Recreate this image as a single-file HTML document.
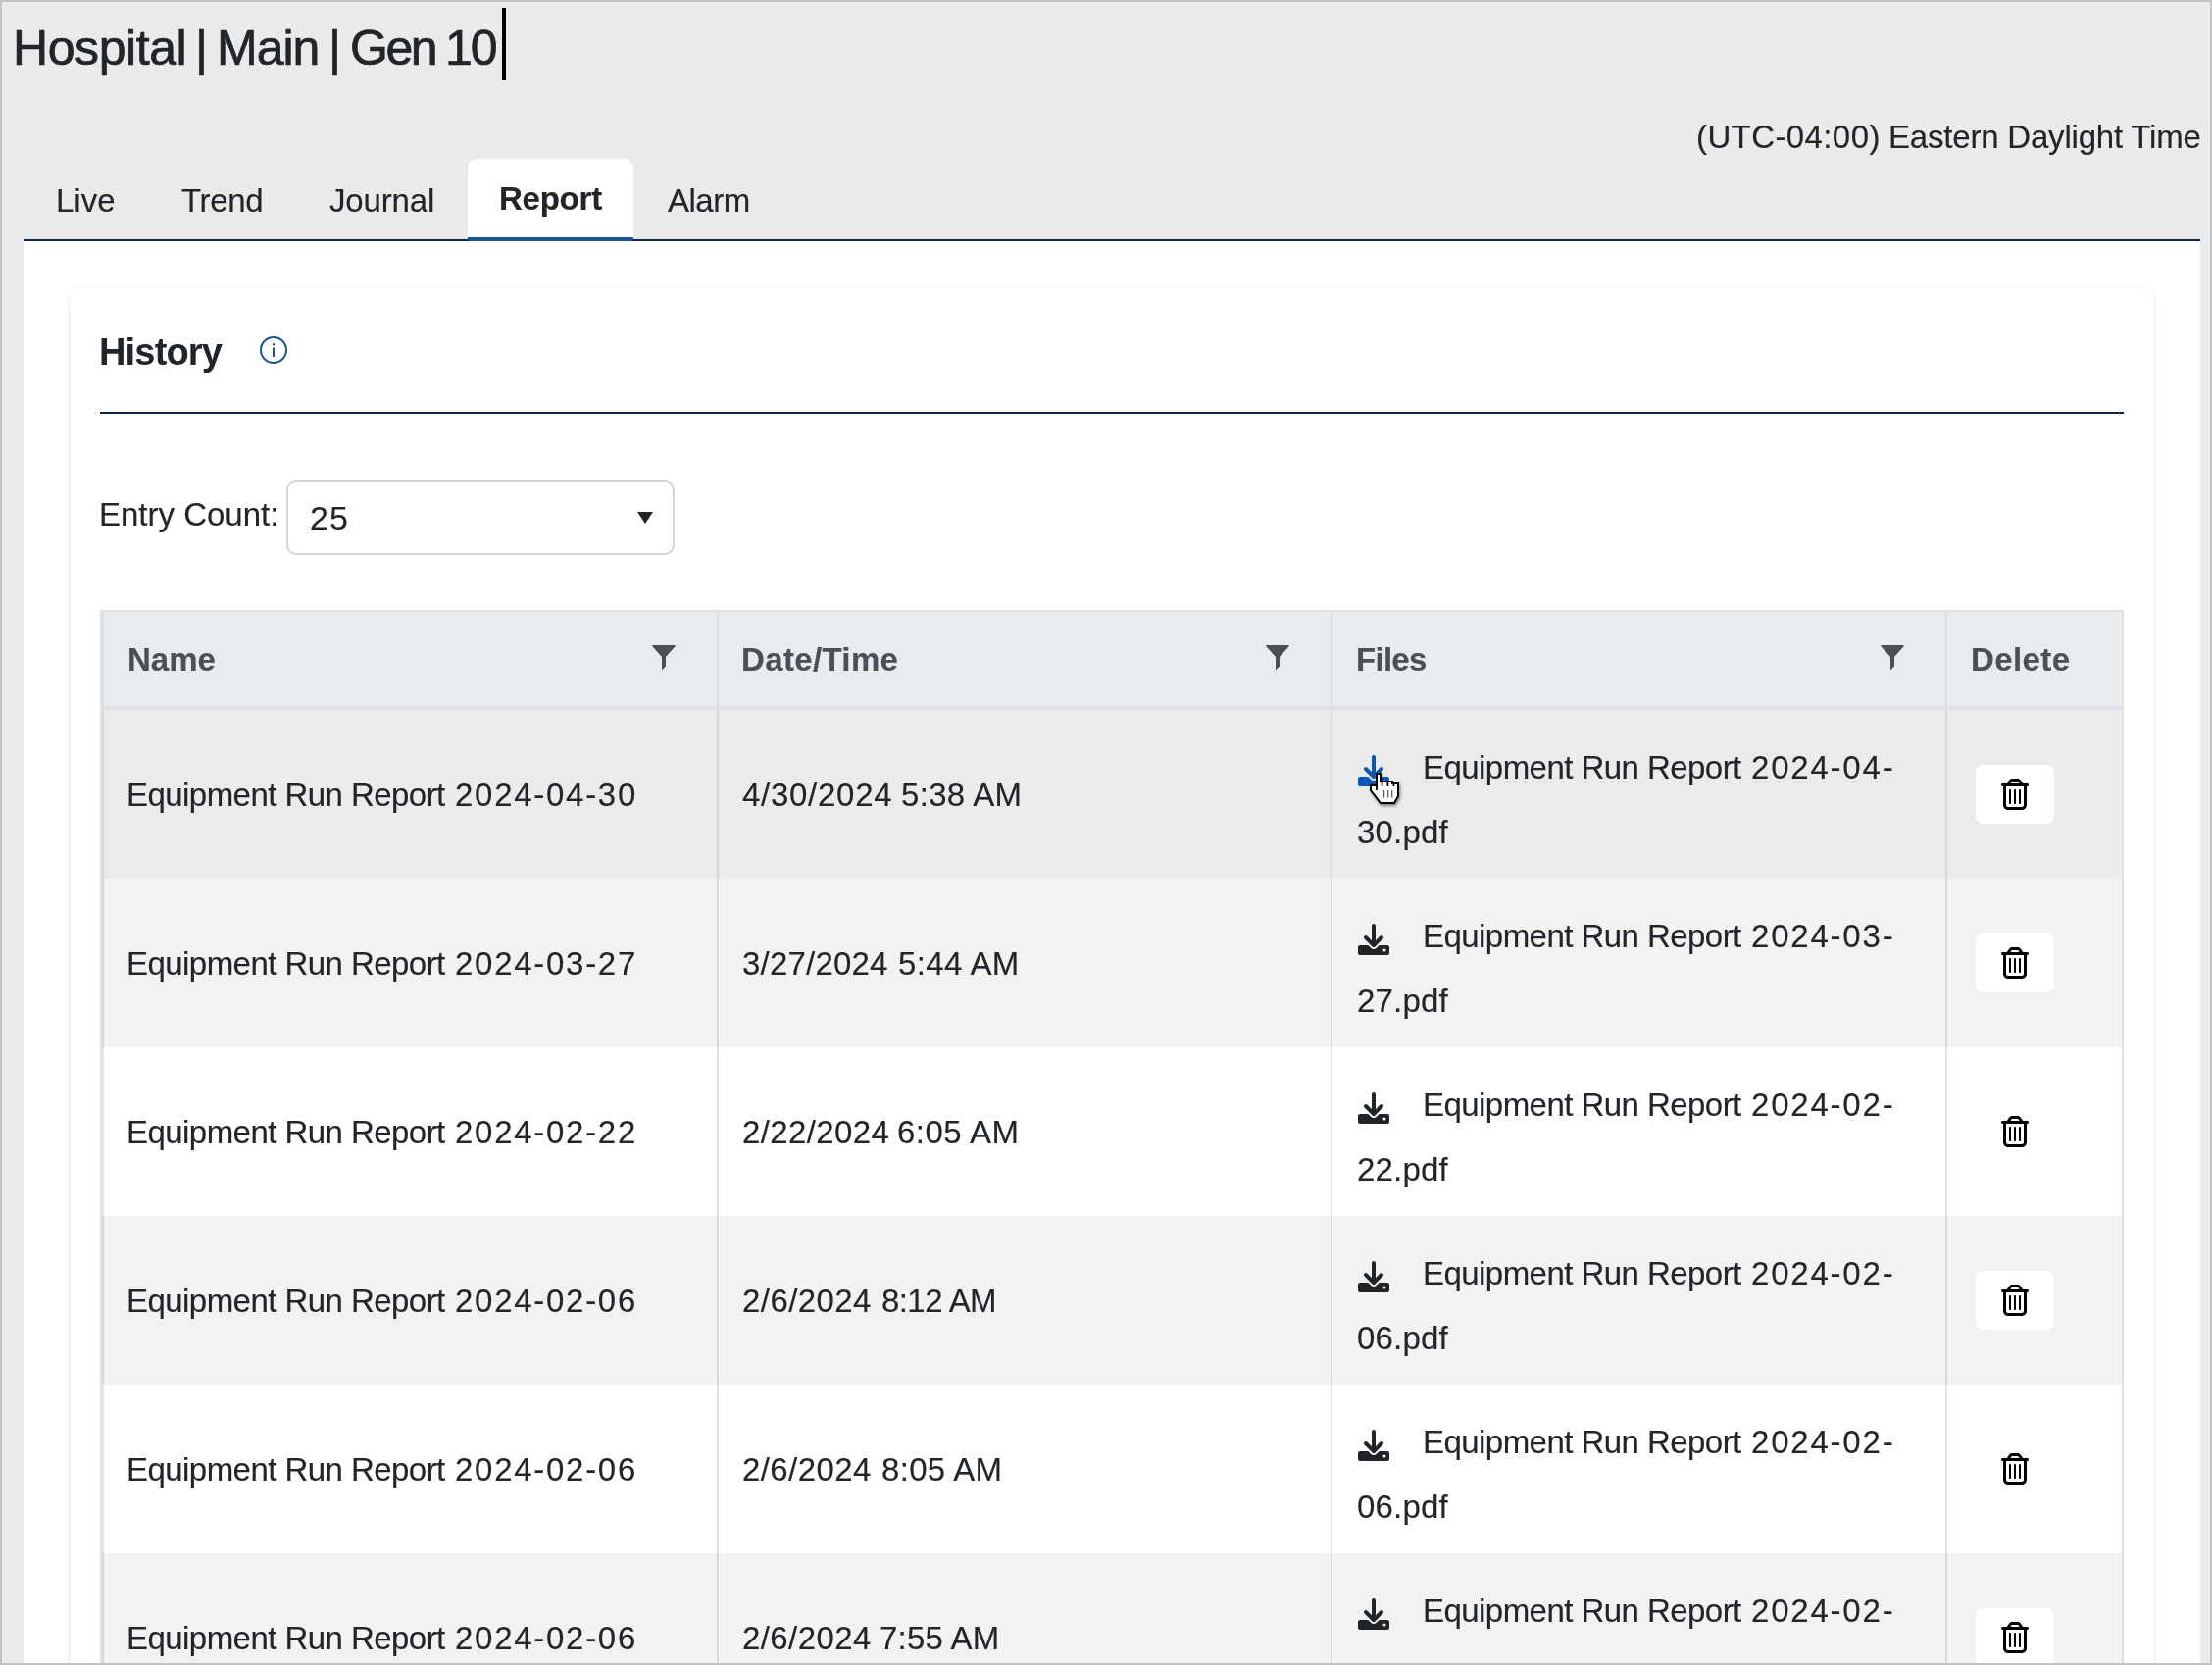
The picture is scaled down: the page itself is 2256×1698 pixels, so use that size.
<!DOCTYPE html>
<html><head><meta charset="utf-8">
<style>
*{box-sizing:border-box;margin:0;padding:0}
html,body{width:2256px;height:1698px;overflow:hidden}
body{-webkit-font-smoothing:antialiased;position:relative;background:#eaeaea;font-family:"Liberation Sans",sans-serif;color:#212529}
.frame{position:absolute;left:0;top:0;width:2256px;height:1698px;border:2px solid #bfc4c8;z-index:50}
.abs{position:absolute;white-space:nowrap}
.t,.tx{will-change:transform}
.t{font-size:33px;line-height:33px;-webkit-text-stroke:0.15px currentColor}
.hd{font-weight:700;color:#495057}
.row{position:absolute;left:104px;width:2060px;height:172px}
.vd{position:absolute;width:2px}
.delbtn{position:absolute;left:2015px;width:80px;height:60px;background:#fff;border-radius:8px}
</style></head>
<body>
<div class="frame"></div>
<div class="abs tx" style="left:13px;top:24px;font-size:50px;line-height:50px;-webkit-text-stroke:0.7px #212529;letter-spacing:-0.43px">Hospital</div>
<div class="abs tx" style="left:199.3px;top:24px;font-size:50px;line-height:50px;-webkit-text-stroke:0.7px #212529;letter-spacing:0px">|</div>
<div class="abs tx" style="left:221px;top:24px;font-size:50px;line-height:50px;-webkit-text-stroke:0.7px #212529;letter-spacing:-1px">Main</div>
<div class="abs tx" style="left:335px;top:24px;font-size:50px;line-height:50px;-webkit-text-stroke:0.7px #212529;letter-spacing:0px">|</div>
<div class="abs tx" style="left:357px;top:24px;font-size:50px;line-height:50px;-webkit-text-stroke:0.7px #212529;letter-spacing:-2.5px">Gen</div>
<div class="abs tx" style="left:454px;top:24px;font-size:50px;line-height:50px;-webkit-text-stroke:0.7px #212529;letter-spacing:-2px">10</div>
<div class="abs" style="left:512px;top:8px;width:4px;height:74px;background:#000"></div>
<div class="abs t" style="left:1730px;top:123px;letter-spacing:0.4px">(UTC-04:00)</div>
<div class="abs t" style="left:1926px;top:123px;letter-spacing:-0.2px">Eastern Daylight Time</div>
<div class="abs" style="left:24px;top:246px;width:2220px;height:1452px;background:#fff"></div>
<div class="abs" style="left:477px;top:162px;width:169px;height:84px;background:#fff;border-radius:10px 10px 0 0"></div>
<div class="abs" style="left:24px;top:244px;width:2220px;height:2px;background:#0f2443"></div>
<div class="abs" style="left:477px;top:242px;width:169px;height:4px;background:#1a5494"></div>
<div class="abs t" style="left:57px;top:188px;">Live</div>
<div class="abs t" style="left:185px;top:188px;letter-spacing:-0.37px">Trend</div>
<div class="abs t" style="left:336px;top:188px;letter-spacing:-0.17px">Journal</div>
<div class="abs t" style="left:509px;top:186px;font-weight:700;letter-spacing:-0.24px">Report</div>
<div class="abs t" style="left:681px;top:188px;letter-spacing:-0.5px">Alarm</div>
<div class="abs" style="left:72px;top:294px;width:2124px;height:1500px;background:#fff;border-radius:14px;box-shadow:0 2px 7px rgba(30,40,60,.13)"></div>
<div class="abs tx" style="left:101px;top:340px;font-size:38px;line-height:38px;font-weight:700;letter-spacing:-0.83px">History</div>
<svg class="abs" style="left:263px;top:341px" width="32" height="32" viewBox="0 0 32 32"><circle cx="16" cy="16" r="13" fill="none" stroke="#1a5494" stroke-width="2"/><rect x="15" y="9.3" width="2" height="2" fill="#1a5494"/><rect x="15" y="13.5" width="2" height="9.5" fill="#1a5494"/></svg>
<div class="abs" style="left:102px;top:420px;width:2064px;height:2px;background:#0f2443"></div>
<div class="abs t" style="left:101px;top:508px;">Entry Count:</div>
<div class="abs" style="left:292px;top:490px;width:396px;height:76px;border:2px solid #ced4da;border-radius:10px;background:#fff"></div>
<div class="abs t" style="left:316px;top:512px;letter-spacing:1.2px;font-size:34px">25</div>
<svg class="abs" style="left:650px;top:522px" width="16" height="12" viewBox="0 0 16 12"><path d="M0 0H16L8 12Z" fill="#212529"/></svg>
<div class="abs" style="left:102px;top:622px;width:2064px;height:1100px;background:#fff;border:2px solid #e0e3e5;border-bottom:none"></div>
<div class="abs" style="left:104px;top:624px;width:2060px;height:96px;background:#e9ecef"></div>
<div class="abs" style="left:104px;top:720px;width:2060px;height:4px;background:#dde1e5"></div>
<div class="vd" style="left:104px;top:624px;height:96px;background:#dadee1"></div>
<div class="vd" style="left:731px;top:624px;height:96px;background:#dadee1"></div>
<div class="vd" style="left:1357px;top:624px;height:96px;background:#dadee1"></div>
<div class="vd" style="left:1984px;top:624px;height:96px;background:#dadee1"></div>
<div class="abs t" style="left:130px;top:656px;font-weight:700;color:#495057">Name</div>
<div class="abs t" style="left:756px;top:656px;font-weight:700;color:#495057;letter-spacing:0.35px">Date/Time</div>
<div class="abs t" style="left:1383px;top:656px;font-weight:700;color:#495057;letter-spacing:-0.72px">Files</div>
<div class="abs t" style="left:2010px;top:656px;font-weight:700;color:#495057;letter-spacing:0.4px">Delete</div>
<svg class="abs" style="left:665px;top:658px" width="24" height="26" viewBox="0 0 24 26"><path fill="#495057" d="M1 0H23Q24.5 0 23.6 1.3L14 12V21.6L10 25.6V12L0.4 1.3Q-0.5 0 1 0Z"/></svg>
<svg class="abs" style="left:1291px;top:658px" width="24" height="26" viewBox="0 0 24 26"><path fill="#495057" d="M1 0H23Q24.5 0 23.6 1.3L14 12V21.6L10 25.6V12L0.4 1.3Q-0.5 0 1 0Z"/></svg>
<svg class="abs" style="left:1918px;top:658px" width="24" height="26" viewBox="0 0 24 26"><path fill="#495057" d="M1 0H23Q24.5 0 23.6 1.3L14 12V21.6L10 25.6V12L0.4 1.3Q-0.5 0 1 0Z"/></svg>
<div class="row" style="top:724px;background:#ebebeb"></div>
<div class="vd" style="left:104px;top:724px;height:172px;background:#d6d8d8"></div>
<div class="vd" style="left:731px;top:724px;height:172px;background:#d6d8d8"></div>
<div class="vd" style="left:1357px;top:724px;height:172px;background:#d6d8d8"></div>
<div class="vd" style="left:1984px;top:724px;height:172px;background:#d6d8d8"></div>
<div class="abs t" style="left:129px;top:794px;letter-spacing:-0.55px">Equipment Run Report</div>
<div class="abs t" style="left:463.5px;top:794px;letter-spacing:1.72px">2024-04-30</div>
<div class="abs t" style="left:757.0px;top:794px;letter-spacing:0.72px">4/30/2024</div>
<div class="abs t" style="left:919.4px;top:794px;letter-spacing:0.32px">5:38 AM</div>
<svg class="abs" style="left:1385px;top:770px" width="32" height="32" viewBox="0 0 512 512"><path fill="#0b57b8" d="M288 32c0-17.7-14.3-32-32-32s-32 14.3-32 32V274.7l-73.4-73.4c-12.5-12.5-32.8-12.5-45.3 0s-12.5 32.8 0 45.3l128 128c12.5 12.5 32.8 12.5 45.3 0l128-128c12.5-12.5 12.5-32.8 0-45.3s-32.8-12.5-45.3 0L288 274.7V32zM32 352c-17.7 0-32 14.3-32 32v96c0 17.7 14.3 32 32 32H480c17.7 0 32-14.3 32-32V384c0-17.7-14.3-32-32-32H346.5l-45.3 45.3c-25 25-65.5 25-90.5 0L165.5 352H32zm400 56a24 24 0 1 1 0 48 24 24 0 1 1 0-48z"/></svg>
<div class="abs t" style="left:1451px;top:766px;letter-spacing:-0.55px">Equipment Run Report</div>
<div class="abs t" style="left:1785.5px;top:766px;letter-spacing:1.79px">2024-04-</div>
<div class="abs t" style="left:1384px;top:832px;letter-spacing:0.2px">30.pdf</div>
<div class="delbtn" style="top:780px"></div>
<svg class="abs" style="left:2041px;top:794px" width="28" height="32" viewBox="0 0 448 512"><path fill="#000" d="M170.5 51.6L151.5 80h145l-19-28.4c-1.5-2.2-4-3.6-6.7-3.6H177.1c-2.7 0-5.2 1.3-6.7 3.6zm147-26.6L354.2 80H368h48 8c13.3 0 24 10.7 24 24s-10.7 24-24 24h-8V432c0 44.2-35.8 80-80 80H112c-44.2 0-80-35.8-80-80V128H24c-13.3 0-24-10.7-24-24S10.7 80 24 80h8H80 93.8l36.7-55.1C140.9 9.4 158.4 0 177.1 0h93.7c18.7 0 36.2 9.4 46.6 24.9zM80 128V432c0 17.7 14.3 32 32 32H336c17.7 0 32-14.3 32-32V128H80zm80 64V400c0 8.8-7.2 16-16 16s-16-7.2-16-16V192c0-8.8 7.2-16 16-16s16 7.2 16 16zm80 0V400c0 8.8-7.2 16-16 16s-16-7.2-16-16V192c0-8.8 7.2-16 16-16s16 7.2 16 16zm80 0V400c0 8.8-7.2 16-16 16s-16-7.2-16-16V192c0-8.8 7.2-16 16-16s16 7.2 16 16z"/></svg>
<div class="row" style="top:896px;background:#f2f2f2"></div>
<div class="vd" style="left:104px;top:896px;height:172px;background:#d6d8d8"></div>
<div class="vd" style="left:731px;top:896px;height:172px;background:#d6d8d8"></div>
<div class="vd" style="left:1357px;top:896px;height:172px;background:#d6d8d8"></div>
<div class="vd" style="left:1984px;top:896px;height:172px;background:#d6d8d8"></div>
<div class="abs t" style="left:129px;top:966px;letter-spacing:-0.55px">Equipment Run Report</div>
<div class="abs t" style="left:463.5px;top:966px;letter-spacing:1.72px">2024-03-27</div>
<div class="abs t" style="left:757.0px;top:966px;letter-spacing:0.2px">3/27/2024</div>
<div class="abs t" style="left:915.5px;top:966px;letter-spacing:0.38px">5:44 AM</div>
<svg class="abs" style="left:1385px;top:942px" width="32" height="32" viewBox="0 0 512 512"><path fill="#212529" d="M288 32c0-17.7-14.3-32-32-32s-32 14.3-32 32V274.7l-73.4-73.4c-12.5-12.5-32.8-12.5-45.3 0s-12.5 32.8 0 45.3l128 128c12.5 12.5 32.8 12.5 45.3 0l128-128c12.5-12.5 12.5-32.8 0-45.3s-32.8-12.5-45.3 0L288 274.7V32zM32 352c-17.7 0-32 14.3-32 32v96c0 17.7 14.3 32 32 32H480c17.7 0 32-14.3 32-32V384c0-17.7-14.3-32-32-32H346.5l-45.3 45.3c-25 25-65.5 25-90.5 0L165.5 352H32zm400 56a24 24 0 1 1 0 48 24 24 0 1 1 0-48z"/></svg>
<div class="abs t" style="left:1451px;top:938px;letter-spacing:-0.55px">Equipment Run Report</div>
<div class="abs t" style="left:1785.5px;top:938px;letter-spacing:1.79px">2024-03-</div>
<div class="abs t" style="left:1384px;top:1004px;letter-spacing:0.2px">27.pdf</div>
<div class="delbtn" style="top:952px"></div>
<svg class="abs" style="left:2041px;top:966px" width="28" height="32" viewBox="0 0 448 512"><path fill="#000" d="M170.5 51.6L151.5 80h145l-19-28.4c-1.5-2.2-4-3.6-6.7-3.6H177.1c-2.7 0-5.2 1.3-6.7 3.6zm147-26.6L354.2 80H368h48 8c13.3 0 24 10.7 24 24s-10.7 24-24 24h-8V432c0 44.2-35.8 80-80 80H112c-44.2 0-80-35.8-80-80V128H24c-13.3 0-24-10.7-24-24S10.7 80 24 80h8H80 93.8l36.7-55.1C140.9 9.4 158.4 0 177.1 0h93.7c18.7 0 36.2 9.4 46.6 24.9zM80 128V432c0 17.7 14.3 32 32 32H336c17.7 0 32-14.3 32-32V128H80zm80 64V400c0 8.8-7.2 16-16 16s-16-7.2-16-16V192c0-8.8 7.2-16 16-16s16 7.2 16 16zm80 0V400c0 8.8-7.2 16-16 16s-16-7.2-16-16V192c0-8.8 7.2-16 16-16s16 7.2 16 16zm80 0V400c0 8.8-7.2 16-16 16s-16-7.2-16-16V192c0-8.8 7.2-16 16-16s16 7.2 16 16z"/></svg>
<div class="row" style="top:1068px;background:#ffffff"></div>
<div class="vd" style="left:104px;top:1068px;height:172px;background:#e2e4e4"></div>
<div class="vd" style="left:731px;top:1068px;height:172px;background:#e2e4e4"></div>
<div class="vd" style="left:1357px;top:1068px;height:172px;background:#e2e4e4"></div>
<div class="vd" style="left:1984px;top:1068px;height:172px;background:#e2e4e4"></div>
<div class="abs t" style="left:129px;top:1138px;letter-spacing:-0.55px">Equipment Run Report</div>
<div class="abs t" style="left:463.5px;top:1138px;letter-spacing:1.72px">2024-02-22</div>
<div class="abs t" style="left:757.0px;top:1138px;letter-spacing:0.38px">2/22/2024</div>
<div class="abs t" style="left:915.1px;top:1138px;letter-spacing:0.48px">6:05 AM</div>
<svg class="abs" style="left:1385px;top:1114px" width="32" height="32" viewBox="0 0 512 512"><path fill="#212529" d="M288 32c0-17.7-14.3-32-32-32s-32 14.3-32 32V274.7l-73.4-73.4c-12.5-12.5-32.8-12.5-45.3 0s-12.5 32.8 0 45.3l128 128c12.5 12.5 32.8 12.5 45.3 0l128-128c12.5-12.5 12.5-32.8 0-45.3s-32.8-12.5-45.3 0L288 274.7V32zM32 352c-17.7 0-32 14.3-32 32v96c0 17.7 14.3 32 32 32H480c17.7 0 32-14.3 32-32V384c0-17.7-14.3-32-32-32H346.5l-45.3 45.3c-25 25-65.5 25-90.5 0L165.5 352H32zm400 56a24 24 0 1 1 0 48 24 24 0 1 1 0-48z"/></svg>
<div class="abs t" style="left:1451px;top:1110px;letter-spacing:-0.55px">Equipment Run Report</div>
<div class="abs t" style="left:1785.5px;top:1110px;letter-spacing:1.79px">2024-02-</div>
<div class="abs t" style="left:1384px;top:1176px;letter-spacing:0.2px">22.pdf</div>
<div class="delbtn" style="top:1124px"></div>
<svg class="abs" style="left:2041px;top:1138px" width="28" height="32" viewBox="0 0 448 512"><path fill="#000" d="M170.5 51.6L151.5 80h145l-19-28.4c-1.5-2.2-4-3.6-6.7-3.6H177.1c-2.7 0-5.2 1.3-6.7 3.6zm147-26.6L354.2 80H368h48 8c13.3 0 24 10.7 24 24s-10.7 24-24 24h-8V432c0 44.2-35.8 80-80 80H112c-44.2 0-80-35.8-80-80V128H24c-13.3 0-24-10.7-24-24S10.7 80 24 80h8H80 93.8l36.7-55.1C140.9 9.4 158.4 0 177.1 0h93.7c18.7 0 36.2 9.4 46.6 24.9zM80 128V432c0 17.7 14.3 32 32 32H336c17.7 0 32-14.3 32-32V128H80zm80 64V400c0 8.8-7.2 16-16 16s-16-7.2-16-16V192c0-8.8 7.2-16 16-16s16 7.2 16 16zm80 0V400c0 8.8-7.2 16-16 16s-16-7.2-16-16V192c0-8.8 7.2-16 16-16s16 7.2 16 16zm80 0V400c0 8.8-7.2 16-16 16s-16-7.2-16-16V192c0-8.8 7.2-16 16-16s16 7.2 16 16z"/></svg>
<div class="row" style="top:1240px;background:#f2f2f2"></div>
<div class="vd" style="left:104px;top:1240px;height:172px;background:#d6d8d8"></div>
<div class="vd" style="left:731px;top:1240px;height:172px;background:#d6d8d8"></div>
<div class="vd" style="left:1357px;top:1240px;height:172px;background:#d6d8d8"></div>
<div class="vd" style="left:1984px;top:1240px;height:172px;background:#d6d8d8"></div>
<div class="abs t" style="left:129px;top:1310px;letter-spacing:-0.55px">Equipment Run Report</div>
<div class="abs t" style="left:463.5px;top:1310px;letter-spacing:1.72px">2024-02-06</div>
<div class="abs t" style="left:757.0px;top:1310px;letter-spacing:0.43px">2/6/2024</div>
<div class="abs t" style="left:898.6px;top:1310px;letter-spacing:-0.58px">8:12 AM</div>
<svg class="abs" style="left:1385px;top:1286px" width="32" height="32" viewBox="0 0 512 512"><path fill="#212529" d="M288 32c0-17.7-14.3-32-32-32s-32 14.3-32 32V274.7l-73.4-73.4c-12.5-12.5-32.8-12.5-45.3 0s-12.5 32.8 0 45.3l128 128c12.5 12.5 32.8 12.5 45.3 0l128-128c12.5-12.5 12.5-32.8 0-45.3s-32.8-12.5-45.3 0L288 274.7V32zM32 352c-17.7 0-32 14.3-32 32v96c0 17.7 14.3 32 32 32H480c17.7 0 32-14.3 32-32V384c0-17.7-14.3-32-32-32H346.5l-45.3 45.3c-25 25-65.5 25-90.5 0L165.5 352H32zm400 56a24 24 0 1 1 0 48 24 24 0 1 1 0-48z"/></svg>
<div class="abs t" style="left:1451px;top:1282px;letter-spacing:-0.55px">Equipment Run Report</div>
<div class="abs t" style="left:1785.5px;top:1282px;letter-spacing:1.79px">2024-02-</div>
<div class="abs t" style="left:1384px;top:1348px;letter-spacing:0.2px">06.pdf</div>
<div class="delbtn" style="top:1296px"></div>
<svg class="abs" style="left:2041px;top:1310px" width="28" height="32" viewBox="0 0 448 512"><path fill="#000" d="M170.5 51.6L151.5 80h145l-19-28.4c-1.5-2.2-4-3.6-6.7-3.6H177.1c-2.7 0-5.2 1.3-6.7 3.6zm147-26.6L354.2 80H368h48 8c13.3 0 24 10.7 24 24s-10.7 24-24 24h-8V432c0 44.2-35.8 80-80 80H112c-44.2 0-80-35.8-80-80V128H24c-13.3 0-24-10.7-24-24S10.7 80 24 80h8H80 93.8l36.7-55.1C140.9 9.4 158.4 0 177.1 0h93.7c18.7 0 36.2 9.4 46.6 24.9zM80 128V432c0 17.7 14.3 32 32 32H336c17.7 0 32-14.3 32-32V128H80zm80 64V400c0 8.8-7.2 16-16 16s-16-7.2-16-16V192c0-8.8 7.2-16 16-16s16 7.2 16 16zm80 0V400c0 8.8-7.2 16-16 16s-16-7.2-16-16V192c0-8.8 7.2-16 16-16s16 7.2 16 16zm80 0V400c0 8.8-7.2 16-16 16s-16-7.2-16-16V192c0-8.8 7.2-16 16-16s16 7.2 16 16z"/></svg>
<div class="row" style="top:1412px;background:#ffffff"></div>
<div class="vd" style="left:104px;top:1412px;height:172px;background:#e2e4e4"></div>
<div class="vd" style="left:731px;top:1412px;height:172px;background:#e2e4e4"></div>
<div class="vd" style="left:1357px;top:1412px;height:172px;background:#e2e4e4"></div>
<div class="vd" style="left:1984px;top:1412px;height:172px;background:#e2e4e4"></div>
<div class="abs t" style="left:129px;top:1482px;letter-spacing:-0.55px">Equipment Run Report</div>
<div class="abs t" style="left:463.5px;top:1482px;letter-spacing:1.72px">2024-02-06</div>
<div class="abs t" style="left:757.0px;top:1482px;letter-spacing:0.41px">2/6/2024</div>
<div class="abs t" style="left:898.9px;top:1482px;letter-spacing:0.32px">8:05 AM</div>
<svg class="abs" style="left:1385px;top:1458px" width="32" height="32" viewBox="0 0 512 512"><path fill="#212529" d="M288 32c0-17.7-14.3-32-32-32s-32 14.3-32 32V274.7l-73.4-73.4c-12.5-12.5-32.8-12.5-45.3 0s-12.5 32.8 0 45.3l128 128c12.5 12.5 32.8 12.5 45.3 0l128-128c12.5-12.5 12.5-32.8 0-45.3s-32.8-12.5-45.3 0L288 274.7V32zM32 352c-17.7 0-32 14.3-32 32v96c0 17.7 14.3 32 32 32H480c17.7 0 32-14.3 32-32V384c0-17.7-14.3-32-32-32H346.5l-45.3 45.3c-25 25-65.5 25-90.5 0L165.5 352H32zm400 56a24 24 0 1 1 0 48 24 24 0 1 1 0-48z"/></svg>
<div class="abs t" style="left:1451px;top:1454px;letter-spacing:-0.55px">Equipment Run Report</div>
<div class="abs t" style="left:1785.5px;top:1454px;letter-spacing:1.79px">2024-02-</div>
<div class="abs t" style="left:1384px;top:1520px;letter-spacing:0.2px">06.pdf</div>
<div class="delbtn" style="top:1468px"></div>
<svg class="abs" style="left:2041px;top:1482px" width="28" height="32" viewBox="0 0 448 512"><path fill="#000" d="M170.5 51.6L151.5 80h145l-19-28.4c-1.5-2.2-4-3.6-6.7-3.6H177.1c-2.7 0-5.2 1.3-6.7 3.6zm147-26.6L354.2 80H368h48 8c13.3 0 24 10.7 24 24s-10.7 24-24 24h-8V432c0 44.2-35.8 80-80 80H112c-44.2 0-80-35.8-80-80V128H24c-13.3 0-24-10.7-24-24S10.7 80 24 80h8H80 93.8l36.7-55.1C140.9 9.4 158.4 0 177.1 0h93.7c18.7 0 36.2 9.4 46.6 24.9zM80 128V432c0 17.7 14.3 32 32 32H336c17.7 0 32-14.3 32-32V128H80zm80 64V400c0 8.8-7.2 16-16 16s-16-7.2-16-16V192c0-8.8 7.2-16 16-16s16 7.2 16 16zm80 0V400c0 8.8-7.2 16-16 16s-16-7.2-16-16V192c0-8.8 7.2-16 16-16s16 7.2 16 16zm80 0V400c0 8.8-7.2 16-16 16s-16-7.2-16-16V192c0-8.8 7.2-16 16-16s16 7.2 16 16z"/></svg>
<div class="row" style="top:1584px;background:#f2f2f2"></div>
<div class="vd" style="left:104px;top:1584px;height:172px;background:#d6d8d8"></div>
<div class="vd" style="left:731px;top:1584px;height:172px;background:#d6d8d8"></div>
<div class="vd" style="left:1357px;top:1584px;height:172px;background:#d6d8d8"></div>
<div class="vd" style="left:1984px;top:1584px;height:172px;background:#d6d8d8"></div>
<div class="abs t" style="left:129px;top:1654px;letter-spacing:-0.55px">Equipment Run Report</div>
<div class="abs t" style="left:463.5px;top:1654px;letter-spacing:1.72px">2024-02-06</div>
<div class="abs t" style="left:757.0px;top:1654px;letter-spacing:0.41px">2/6/2024</div>
<div class="abs t" style="left:897.1px;top:1654px;letter-spacing:0.18px">7:55 AM</div>
<svg class="abs" style="left:1385px;top:1630px" width="32" height="32" viewBox="0 0 512 512"><path fill="#212529" d="M288 32c0-17.7-14.3-32-32-32s-32 14.3-32 32V274.7l-73.4-73.4c-12.5-12.5-32.8-12.5-45.3 0s-12.5 32.8 0 45.3l128 128c12.5 12.5 32.8 12.5 45.3 0l128-128c12.5-12.5 12.5-32.8 0-45.3s-32.8-12.5-45.3 0L288 274.7V32zM32 352c-17.7 0-32 14.3-32 32v96c0 17.7 14.3 32 32 32H480c17.7 0 32-14.3 32-32V384c0-17.7-14.3-32-32-32H346.5l-45.3 45.3c-25 25-65.5 25-90.5 0L165.5 352H32zm400 56a24 24 0 1 1 0 48 24 24 0 1 1 0-48z"/></svg>
<div class="abs t" style="left:1451px;top:1626px;letter-spacing:-0.55px">Equipment Run Report</div>
<div class="abs t" style="left:1785.5px;top:1626px;letter-spacing:1.79px">2024-02-</div>
<div class="abs t" style="left:1384px;top:1692px;letter-spacing:0.2px">06.pdf</div>
<div class="delbtn" style="top:1640px"></div>
<svg class="abs" style="left:2041px;top:1654px" width="28" height="32" viewBox="0 0 448 512"><path fill="#000" d="M170.5 51.6L151.5 80h145l-19-28.4c-1.5-2.2-4-3.6-6.7-3.6H177.1c-2.7 0-5.2 1.3-6.7 3.6zm147-26.6L354.2 80H368h48 8c13.3 0 24 10.7 24 24s-10.7 24-24 24h-8V432c0 44.2-35.8 80-80 80H112c-44.2 0-80-35.8-80-80V128H24c-13.3 0-24-10.7-24-24S10.7 80 24 80h8H80 93.8l36.7-55.1C140.9 9.4 158.4 0 177.1 0h93.7c18.7 0 36.2 9.4 46.6 24.9zM80 128V432c0 17.7 14.3 32 32 32H336c17.7 0 32-14.3 32-32V128H80zm80 64V400c0 8.8-7.2 16-16 16s-16-7.2-16-16V192c0-8.8 7.2-16 16-16s16 7.2 16 16zm80 0V400c0 8.8-7.2 16-16 16s-16-7.2-16-16V192c0-8.8 7.2-16 16-16s16 7.2 16 16zm80 0V400c0 8.8-7.2 16-16 16s-16-7.2-16-16V192c0-8.8 7.2-16 16-16s16 7.2 16 16z"/></svg>
<svg class="abs" style="left:1397px;top:788px;overflow:visible;filter:drop-shadow(1px 2px 1.5px rgba(0,0,0,.45))" width="34" height="36" viewBox="0 0 17 18"><path d="M3.5 0.5H5.5V4.5H11.5V5.5H14.5V12L12.5 15.5H5.5L0.5 9V6.5H3.5Z" fill="#fff" stroke="#000" stroke-width="1"/><path d="M3.5 6.5V9M6.3 4.5V7M9.2 4.5V7M12.2 5.5V7" stroke="#000" stroke-width="0.9" fill="none"/><path d="M7.3 9V12.8M9.35 9V12.8M11.35 9V12.8" stroke="#555" stroke-width="0.6" fill="none"/></svg>
</body></html>
